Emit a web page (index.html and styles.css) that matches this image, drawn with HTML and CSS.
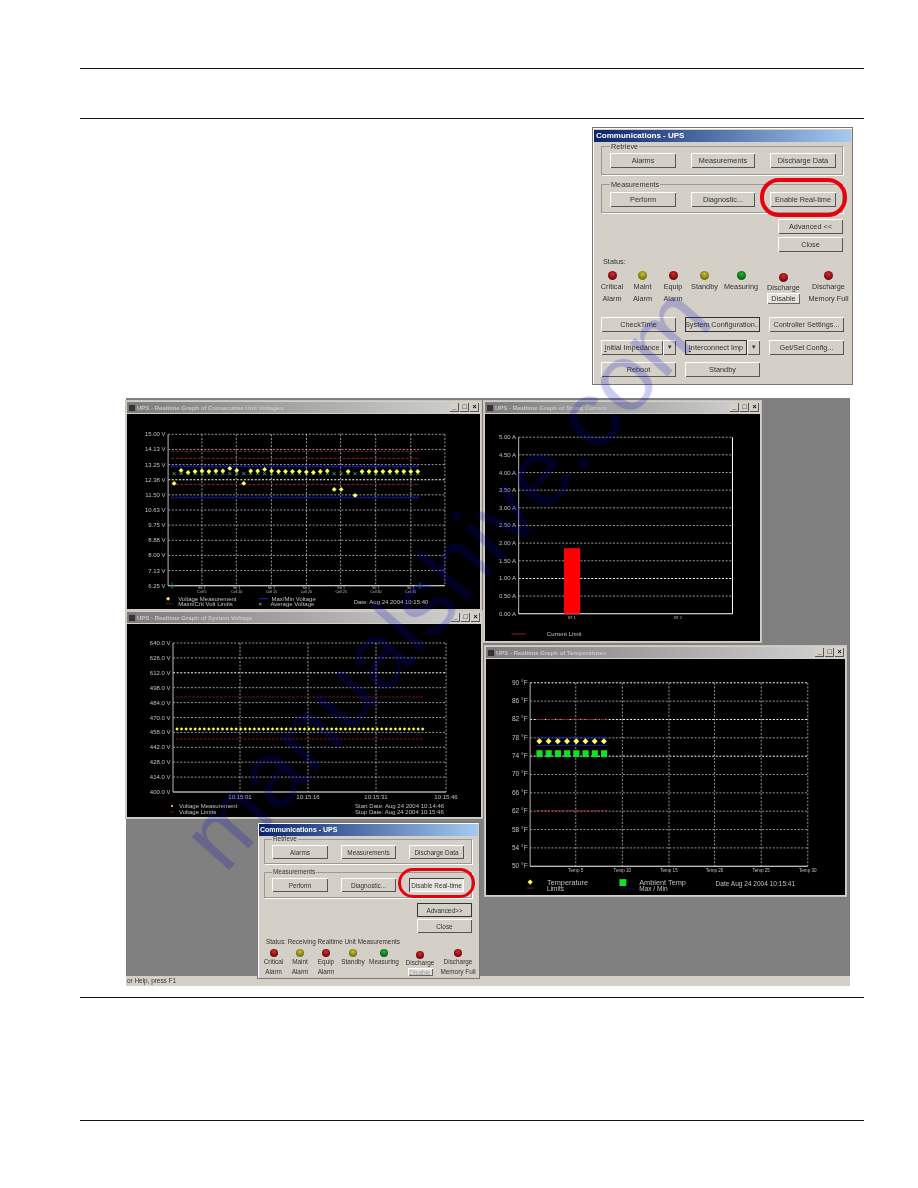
FILE: index.html
```html
<!DOCTYPE html>
<html lang="en">
<head>
    <meta charset="UTF-8">
    <title>Communications - UPS</title>
    <link rel="stylesheet" href="styles.css">
</head>
<body>

<div class="page">
    <hr class="rule rule-top">
    <hr class="rule rule-sub">

    <div class="shots">
        <!-- Communications dialog, before real-time is on -->
        <div class="dlg dlg-big">
            <div class="dlg-title">Communications - UPS</div>
            <fieldset class="grp">
                <legend>Retrieve</legend>
                <div class="btn-row">
                    <button>Alarms</button>
                    <button>Measurements</button>
                    <button>Discharge Data</button>
                </div>
            </fieldset>
            <fieldset class="grp">
                <legend>Measurements</legend>
                <div class="btn-row">
                    <button>Perform</button>
                    <button>Diagnostic...</button>
                    <button>Enable Real-time</button>
                </div>
            </fieldset>
            <div class="side-btns">
                <button>Advanced &lt;&lt;</button>
                <button>Close</button>
            </div>
            <div class="status">Status:</div>
            <div class="leds">
                <div class="led-item"><i class="led red"></i>Critical<br>Alarm</div>
                <div class="led-item"><i class="led olive"></i>Maint<br>Alarm</div>
                <div class="led-item"><i class="led red"></i>Equip<br>Alarm</div>
                <div class="led-item"><i class="led olive"></i>Standby</div>
                <div class="led-item"><i class="led green"></i>Measuring</div>
                <div class="led-item low"><i class="led red"></i>Discharge<button class="mini">Disable</button></div>
                <div class="led-item"><i class="led red"></i>Discharge<br>Memory Full</div>
            </div>
            <div class="tools">
                <button>CheckTime</button>
                <button class="focus">System Configuration...</button>
                <button>Controller Settings...</button>
                <div class="split"><button><u>I</u>nitial Impedance</button><button class="arrow">&#9662;</button></div>
                <div class="split"><button class="focus"><u>I</u>nterconnect Imp</button><button class="arrow">&#9662;</button></div>
                <button>Get/Set Config...</button>
                <button>Reboot</button>
                <button>Standby</button>
            </div>
            <div class="ring"></div>
        </div>

        <!-- Real-time graph windows -->
        <div class="desktop">
            <div class="win win-cells">
                <div class="win-title"><i class="win-icon"></i><span>UPS - Realtime Graph of Consecutive Unit Voltages</span><b class="win-btn">_</b><b class="win-btn">&#9633;</b><b class="win-btn">&#215;</b></div>
                <svg id="chartCells" class="plot" viewBox="126 413 352 194"></svg>
            </div>
            <div class="win win-system">
                <div class="win-title"><i class="win-icon"></i><span>UPS - Realtime Graph of System Voltage</span><b class="win-btn">_</b><b class="win-btn">&#9633;</b><b class="win-btn">&#215;</b></div>
                <svg id="chartSystem" class="plot" viewBox="126 624 354 193"></svg>
            </div>
            <div class="win win-current">
                <div class="win-title"><i class="win-icon"></i><span>UPS - Realtime Graph of String Current</span><b class="win-btn">_</b><b class="win-btn">&#9633;</b><b class="win-btn">&#215;</b></div>
                <svg id="chartCurrent" class="plot" viewBox="486 414 272 225"></svg>
            </div>
            <div class="win win-temps">
                <div class="win-title"><i class="win-icon"></i><span>UPS - Realtime Graph of Temperatures</span><b class="win-btn">_</b><b class="win-btn">&#9633;</b><b class="win-btn">&#215;</b></div>
                <svg id="chartTemps" class="plot" viewBox="486 658 359 238"></svg>
            </div>

            <div class="statusbar">or Help, press F1</div>

            <div class="dlg dlg-small">
                <div class="dlg-title">Communications - UPS</div>
                <fieldset class="grp">
                    <legend>Retrieve</legend>
                    <div class="btn-row">
                        <button>Alarms</button>
                        <button>Measurements</button>
                        <button>Discharge Data</button>
                    </div>
                </fieldset>
                <fieldset class="grp">
                    <legend>Measurements</legend>
                    <div class="btn-row">
                        <button>Perform</button>
                        <button>Diagnostic...</button>
                        <button class="pressed">Disable Real-time</button>
                    </div>
                </fieldset>
                <div class="side-btns">
                    <button class="focus">Advanced&gt;&gt;</button>
                    <button>Close</button>
                </div>
                <div class="status">Status: Receiving Realtime Unit Measurements</div>
                <div class="leds">
                    <div class="led-item"><i class="led red"></i>Critical<br>Alarm</div>
                    <div class="led-item"><i class="led olive"></i>Maint<br>Alarm</div>
                    <div class="led-item"><i class="led red"></i>Equip<br>Alarm</div>
                    <div class="led-item"><i class="led olive"></i>Standby</div>
                    <div class="led-item"><i class="led green"></i>Measuring</div>
                    <div class="led-item low"><i class="led red"></i>Discharge<button class="mini off">Disable</button></div>
                    <div class="led-item"><i class="led red"></i>Discharge<br>Memory Full</div>
                </div>
                <div class="ring"></div>
            </div>
        </div>
    </div>

    <hr class="rule rule-end">
    <hr class="rule rule-foot">
</div>

<div class="watermark">manualshive.com</div>

<script src="charts.js"></script>
</body>
</html>
```
FILE: styles.css
```css
* {
    box-sizing: border-box;
}
body {
    margin: 0;
    background-color: #fff;
    font-family: "Liberation Sans", Arial, sans-serif;
    overflow: hidden;
}
.page {
    position: relative;
    width: 918px;
    height: 1188px;
    padding: 68px 54px 0 80px;
}
.rule {
    margin: 0;
    border: none;
    height: 1px;
    background-color: #111;
}
.rule-sub {
    margin-top: 49px;
}
.rule-end {
    margin-top: 11px;
}
.rule-foot {
    margin-top: 122px;
}
.shots {
    padding-top: 8px;
    filter: blur(0.4px);
}

/* dialogs */
.dlg {
    position: relative;
    background-color: #d4d0c8;
    border: 1px solid #777;
    box-shadow: inset 1px 1px 0 #fff;
    color: #333;
}
.dlg button {
    display: block;
    padding: 0;
    background-color: #d4d0c8;
    border: none;
    box-shadow: inset 1px 1px 0 #fff, inset -1px -1px 0 #555;
    font-family: inherit;
    font-size: inherit;
    color: #333;
    white-space: nowrap;
    overflow: hidden;
}
.dlg button.focus {
    box-shadow: inset 0 0 0 1px #333;
}
.dlg button.pressed {
    background-color: #e8e6e0;
    box-shadow: inset 1px 1px 0 #444, inset -1px -1px 0 #fff;
}
.dlg-title {
    background: linear-gradient(to right, #0a246a, #a6caf0);
    color: #fff;
    font-weight: bold;
    white-space: nowrap;
}
.grp {
    margin: 0;
    min-width: 0;
    border: 1px solid #999;
    box-shadow: 1px 1px 0 #fff;
}
.grp legend {
    padding: 0 1px;
    line-height: 1;
}
.btn-row {
    display: grid;
}
.side-btns {
    display: grid;
    justify-content: end;
}
.leds {
    display: grid;
    text-align: center;
}
.led-item {
    display: flex;
    flex-direction: column;
    align-items: center;
    white-space: nowrap;
}
.led {
    display: block;
    border-radius: 50%;
}
.led.red {
    background: radial-gradient(circle at 50% 35%, #d03030, #7a0c12 60%);
}
.led.olive {
    background: radial-gradient(circle at 50% 35%, #c8c040, #7c7a10 60%);
}
.led.green {
    background: radial-gradient(circle at 50% 35%, #30b040, #0a6a18 60%);
}
.dlg button.mini {
    box-shadow: inset 1px 1px 0 #fff, inset -1px -1px 0 #666;
    background-color: #e4e2dc;
}
.dlg button.mini.off {
    color: #999;
}
.ring {
    position: absolute;
    border-style: solid;
    border-color: #e8000c;
    pointer-events: none;
}

/* large dialog */
.dlg-big {
    width: 261px;
    height: 258px;
    margin-left: 512px;
    padding: 2px 1px;
    font-size: 7.3px;
}
.dlg-big .dlg-title {
    height: 12px;
    padding-left: 2px;
    font-size: 8px;
    line-height: 12px;
}
.dlg-big .grp {
    margin: 1px 8px 0 7px;
    height: 32px;
    padding: 0 8px;
}
.dlg-big .grp + .grp {
    margin-top: 6px;
}
.dlg-big .btn-row {
    grid-template-columns: 66px 64px 66px;
    column-gap: 15px;
    margin-top: 3px;
}
.dlg-big .grp + .grp .btn-row {
    margin-top: 4px;
}
.dlg-big .btn-row button {
    height: 15px;
}
.dlg-big .side-btns {
    grid-template-columns: 65px;
    row-gap: 3px;
    margin: 6px 8px 0 0;
}
.dlg-big .side-btns button {
    height: 15px;
}
.dlg-big .status {
    margin: 5px 0 0 9px;
    line-height: 9px;
}
.dlg-big .leds {
    grid-template-columns: 30px 31px 30px 33px 40px 45px 45px;
    margin: 5px 0 0 3px;
    height: 42px;
}
.dlg-big .led-item {
    line-height: 11.7px;
}
.dlg-big .led {
    width: 9px;
    height: 9px;
    margin-bottom: 1px;
}
.dlg-big .led-item.low {
    padding-top: 2px;
    line-height: 9px;
}
.dlg-big .mini {
    width: 33px;
    height: 11px;
    margin-top: 1px;
}
.dlg-big .tools {
    display: grid;
    grid-template-columns: 75px 75px 75px;
    column-gap: 9px;
    row-gap: 7.5px;
    margin: 4px 0 0 7px;
}
.dlg-big .tools button {
    height: 15px;
}
.split {
    display: flex;
}
.dlg .split button:first-child {
    flex: 1;
}
.dlg .split .arrow {
    width: 13px;
    font-size: 7px;
}
.dlg-big .ring {
    left: 167px;
    top: 50px;
    width: 87px;
    height: 39px;
    border-width: 4px;
    border-radius: 19px;
}

/* desktop with the graph windows */
.desktop {
    position: relative;
    width: 724px;
    height: 588px;
    margin: 13px 0 0 46px;
    background-color: #808080;
}
.win {
    position: absolute;
    background-color: #d4d0c8;
    border: 1px solid #c8c4bc;
    padding: 1px;
    display: flex;
    flex-direction: column;
}
.win-cells {
    left: -1px;
    top: 2px;
    width: 357px;
    height: 211px;
}
.win-system {
    left: -1px;
    top: 212px;
    width: 358px;
    height: 209px;
}
.win-current {
    left: 357px;
    top: 2px;
    width: 279px;
    height: 243px;
}
.win-temps {
    left: 358px;
    top: 247px;
    width: 363px;
    height: 252px;
}
.win-title {
    display: flex;
    align-items: center;
    flex: none;
    height: 11px;
    padding-right: 1px;
    margin-bottom: 1px;
    background: linear-gradient(to right, #7c7c7c, #d4d4d4);
    color: #c8c8c8;
    font-size: 6px;
    font-weight: bold;
    white-space: nowrap;
}
.win-title span {
    flex: 1;
}
.win-icon {
    width: 8px;
    height: 8px;
    margin: 0 1px;
    background-color: #333;
    border: 1px solid #777;
}
.win-btn {
    width: 9px;
    height: 9px;
    margin-left: 1px;
    background-color: #d4d0c8;
    box-shadow: inset -1px -1px 0 #555;
    color: #000;
    font-size: 7px;
    line-height: 8px;
    text-align: center;
}
.plot {
    display: block;
    flex: 1;
    min-height: 0;
    width: 100%;
    background-color: #000;
}
.plot text {
    font-family: "Liberation Sans", Arial, sans-serif;
    font-size: 6px;
    fill: #c0c0c0;
}
.plot .tiny {
    font-size: 3.6px;
}
.plot .big {
    font-size: 7.4px;
}
.plot .mid {
    font-size: 6.6px;
}

/* small dialog */
.dlg-small {
    position: absolute;
    left: 131px;
    top: 424px;
    width: 223px;
    height: 157px;
    padding: 1px;
    font-size: 6.4px;
}
.dlg-small .dlg-title {
    height: 12px;
    padding-left: 1px;
    font-size: 7px;
    line-height: 12px;
}
.dlg-small .grp {
    margin: 0 6px 0 5px;
    height: 28px;
    padding: 0 7px;
}
.dlg-small .grp + .grp {
    margin-top: 5px;
    height: 29px;
}
.dlg-small .btn-row {
    grid-template-columns: 56px 55px 55px;
    column-gap: 13px;
    margin-top: 3px;
}
.dlg-small .btn-row button {
    height: 14px;
}
.dlg-small .side-btns {
    grid-template-columns: 55px;
    row-gap: 2px;
    margin: 5px 6px 0 0;
}
.dlg-small .side-btns button {
    height: 14px;
}
.dlg-small .status {
    margin: 5px 0 0 7px;
    line-height: 8px;
}
.dlg-small .leds {
    grid-template-columns: 27px 26px 26px 28px 34px 38px 38px;
    margin: 3px 0 0 1px;
}
.dlg-small .led-item {
    line-height: 10px;
}
.dlg-small .led {
    width: 8px;
    height: 8px;
}
.dlg-small .led-item.low {
    padding-top: 2px;
    line-height: 8px;
}
.dlg-small .mini {
    width: 25px;
    height: 8px;
    margin-top: 1px;
}
.dlg-small .ring {
    left: 140px;
    top: 45px;
    width: 77px;
    height: 30px;
    border-width: 3px;
    border-radius: 15px;
}
.statusbar {
    position: absolute;
    left: 0;
    right: 0;
    bottom: 0;
    height: 10px;
    padding-left: 1px;
    background-color: #d4d0c8;
    color: #333;
    font-size: 6.4px;
    line-height: 10px;
}

/* watermark over the whole page */
.watermark {
    position: absolute;
    left: 236px;
    top: 790px;
    transform: rotate(-48.4deg);
    transform-origin: left bottom;
    color: rgba(0, 0, 190, 0.2);
    font-size: 95px;
    line-height: 1;
    white-space: nowrap;
    pointer-events: none;
    filter: blur(0.5px);
}
```
FILE: charts.js
```js
// Tekan grafik realtime, semua koordinat dalam piksel halaman
const GRID = '#d8d8d8';

function line(x1, y1, x2, y2, color, width, dash) {
    const d = dash ? ` stroke-dasharray="${dash}"` : '';
    return `<line x1="${x1}" y1="${y1}" x2="${x2}" y2="${y2}" stroke="${color}" stroke-width="${width}"${d}/>`;
}

function label(x, y, str, anchor, cls) {
    return `<text x="${x}" y="${y}" text-anchor="${anchor || 'start'}" class="${cls || ''}">${str}</text>`;
}

function diamond(x, y, r, color) {
    return `<polygon points="${x},${y - r} ${x + r},${y} ${x},${y + r} ${x - r},${y}" fill="${color}"/>`;
}

// Sumbu, garis grid dan label sumbu Y
function frame(c) {
    let s = '';
    const step = (c.bottom - c.top) / (c.labels.length - 1);
    c.labels.forEach((text, i) => {
        const y = c.top + i * step;
        if (i < c.labels.length - 1) {
            const bold = c.bold && c.bold.includes(i);
            s += line(c.left, y, c.right, y, bold ? '#fff' : GRID, bold ? 1 : 0.7, '2 1.6');
        }
        s += label(c.left - 2.5, y + 2, text, 'end', c.labelClass);
    });
    (c.verticals || []).forEach(x => {
        s += line(x, c.top, x, c.bottom, GRID, 0.7, '2 1.6');
    });
    s += line(c.left, c.top, c.left, c.bottom, '#999', 1.2);
    s += line(c.left, c.bottom, c.right, c.bottom, '#fff', 1);
    return s;
}

function drawCells() {
    let s = frame({
        top: 433, bottom: 584, left: 167, right: 443, bold: [3],
        labels: ['15.00 V', '14.13 V', '13.25 V', '12.38 V', '11.50 V', '10.63 V', '9.75 V', '8.88 V', '8.00 V', '7.13 V', '6.25 V'],
        verticals: [200.7, 235, 270, 305, 339, 374, 409, 443]
    });
    [450, 457, 483].forEach(y => { s += line(170, y, 418, y, '#a02238', 0.9, '3 1.5'); });
    [465, 496].forEach(y => { s += line(170, y, 418, y, '#1818b0', 1.6, '3 1'); });

    const outliers = { 0: 482, 10: 482, 23: 488, 24: 488, 26: 494 };
    const wobble = [0, -1, 1, 0, -0.5, 0, -0.5, -0.5, -3, -1, 0, -0.5, -0.5, -2, -0.5, 0, 0, 0, 0, 0.5, 1, 0, -0.5];
    for (let i = 0; i < 36; i++) {
        const x = 173 + i * 6.94;
        s += `<text x="${x}" y="475" text-anchor="middle" style="font-size:8px;fill:#4fb070">&#215;</text>`;
        const y = outliers[i] || 470 + (wobble[i] || 0);
        s += diamond(x, y, 2.4, '#ffff50');
    }
    s += line(171, 581, 171, 587, '#20a080', 0.8) + line(168, 584, 174, 584, '#20a080', 0.8);
    s += line(418, 581, 418, 587, '#20a080', 0.8) + line(415, 584, 421, 584, '#20a080', 0.8);

    [5, 10, 15, 20, 25, 30, 35].forEach((cell, i) => {
        const x = 200.7 + i * 34.7;
        s += label(x, 587.5, 'Str 1', 'middle', 'tiny');
        s += label(x, 591.5, 'Cell ' + cell, 'middle', 'tiny');
    });

    s += diamond(167, 597, 1.9, '#ffff50') + label(177, 599, 'Voltage Measurement');
    s += line(165, 602, 172, 602, '#a02238', 0.8, '2 1') + label(177, 604, 'Maint/Crit Volt Limits');
    s += line(257, 597, 267, 597, '#1818b0', 1.2) + label(270, 599, 'Max/Min Voltage');
    s += label(259, 604.5, '&#215;', 'middle') + label(269, 604, 'Average Voltage');
    s += label(352, 602, 'Date: Aug 24 2004  10:15:40');
    document.getElementById('chartCells').innerHTML = s;
}

function drawSystem() {
    let s = frame({
        top: 643, bottom: 792, left: 172, right: 445, bold: [2],
        labels: ['640.0 V', '626.0 V', '612.0 V', '498.0 V', '484.0 V', '470.0 V', '458.0 V', '442.0 V', '428.0 V', '414.0 V', '400.0 V'],
        verticals: [239, 307, 375, 445]
    });
    [697, 739].forEach(y => { s += line(175, y, 423, y, '#7a1420', 0.9, '3 1'); });
    for (let i = 0; i < 55; i++) {
        s += diamond(176 + i * 4.55, 729, 1.7, '#ffff60');
    }
    ['10:15:01', '10:15:16', '10:15:31', '10:15:46'].forEach((t, i) => {
        s += label([239, 307, 375, 445][i], 799, t, 'middle');
    });
    s += diamond(171, 806, 1.2, '#ffff60') + label(178, 808, 'Voltage Measurement');
    s += line(169, 812, 173, 812, '#7a1420', 0.8) + label(178, 814, 'Voltage Limits');
    s += label(354, 808, 'Start Date: Aug 24 2004  10:14:46');
    s += label(354, 814, 'Stop Date: Aug 24 2004  10:15:46');
    document.getElementById('chartSystem').innerHTML = s;
}

function drawCurrent() {
    let s = frame({
        top: 437, bottom: 612, left: 519, right: 731, bold: [8],
        labels: ['5.00 A', '4.50 A', '4.00 A', '3.50 A', '3.00 A', '2.50 A', '2.00 A', '1.50 A', '1.00 A', '0.50 A', '0.00 A']
    });
    s += line(731, 437, 731, 612, '#fff', 1);
    s += '<rect x="564" y="547" width="16" height="65" fill="#ff0000"/>';
    s += label(572, 617, 'BT 1', 'middle', 'tiny') + label(677, 617, 'BT 2', 'middle', 'tiny');
    s += line(512, 632, 526, 632, '#a01c40', 0.9) + label(547, 634, 'Current Limit');
    document.getElementById('chartCurrent').innerHTML = s;
}

function drawTemps() {
    const columns = [575, 622, 669, 715, 762, 809];
    let s = frame({
        top: 682, bottom: 867, left: 529, right: 809, bold: [0, 2, 4],
        labels: ['90 &#176;F', '86 &#176;F', '82 &#176;F', '78 &#176;F', '74 &#176;F', '70 &#176;F', '66 &#176;F', '62 &#176;F', '58 &#176;F', '54 &#176;F', '50 &#176;F'],
        verticals: columns,
        labelClass: 'mid'
    });
    [719, 811].forEach(y => { s += line(535, y, 607, y, '#a02030', 1, '4 1'); });
    [737, 745].forEach(y => { s += line(535, y, 607, y, '#1c1ca0', 1); });
    for (let i = 0; i < 8; i++) {
        const x = 538.3 + i * 9.3;
        s += `<rect x="${x - 3}" y="750" width="6.2" height="7" fill="#10e030"/>`;
        s += diamond(x, 741, 3, '#ffff60');
    }
    columns.forEach((x, i) => {
        s += `<text x="${x}" y="873" text-anchor="middle" style="font-size:4.6px">Temp  ${(i + 1) * 5}</text>`;
    });
    s += diamond(529, 883, 2.6, '#ffff40') + label(546, 885.5, 'Temperature', 'start', 'big');
    s += line(526, 889, 532, 889, '#a01c30', 0.9) + label(546, 891.5, 'Limits', 'start', 'mid');
    s += '<rect x="619" y="880" width="7" height="7" fill="#10e030"/>' + label(639, 885.5, 'Ambient Temp', 'start', 'big');
    s += line(620, 890, 635, 890, '#16168c', 1, '3 1') + label(639, 891.5, 'Max / Min', 'start', 'mid');
    s += label(716, 887, 'Date Aug 24 2004  10:15:41', 'start', 'mid');
    document.getElementById('chartTemps').innerHTML = s;
}

drawCells();
drawSystem();
drawCurrent();
drawTemps();
```
